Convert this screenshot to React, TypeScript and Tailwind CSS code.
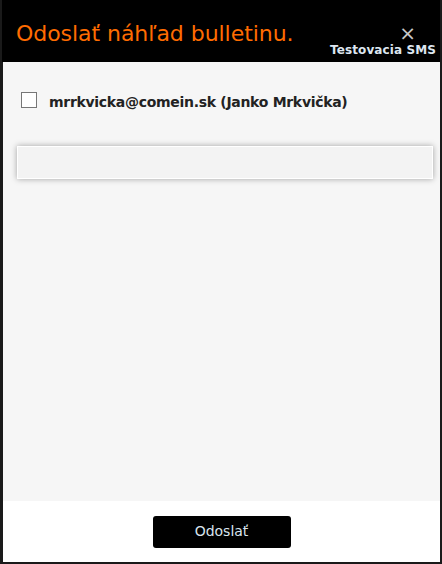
export default function App() {
  return (
    <div className="w-[442px] h-[564px] bg-[#1a1a1a] p-[2px] pt-0 flex flex-col" style={{ fontFamily: 'Tahoma, "DejaVu Sans", Verdana, sans-serif' }}>
      {/* Header */}
      <div className="relative h-[62px] bg-black shrink-0">
        <h1 className="absolute left-[14px] top-[20px] text-[22px] leading-[28px] text-[#ff6c00] tracking-[-0.05px]">
          Odoslať náhľad bulletinu.
        </h1>
        <button className="absolute right-[24px] top-[23px] text-[#c8c8c8] text-[20px] leading-[20px]">×</button>
        <span className="absolute right-[4px] top-[42px] text-[12px] leading-[16px] font-bold text-[#dde6f0] tracking-[0.1px]">
          Testovacia SMS
        </span>
      </div>

      {/* Body */}
      <div className="flex-1 bg-[#f6f6f6] ml-[1px] pl-[14px] pr-[7px] pt-[27px]">
        <label className="flex items-start gap-[12px] pl-[4px]">
          <span className="mt-[3px] w-[16px] h-[16px] border border-[#777] bg-white shrink-0" />
          <span className="text-[14px] leading-[20px] font-bold text-[#222] tracking-[-0.3px] pt-[3px]">
            mrrkvicka@comein.sk (Janko Mrkvička)
          </span>
        </label>
        <div className="mt-[34px] h-[33px] bg-[#f3f3f3] border border-white shadow-[0_0_6px_rgba(0,0,0,0.35)]" />
      </div>

      {/* Footer */}
      <div className="h-[61px] bg-white ml-[1px] flex items-center justify-center shrink-0">
        <button className="w-[138px] h-[32px] bg-black rounded-[3px] text-[14px] text-[#d9e4ee]">
          Odoslať
        </button>
      </div>
    </div>
  )
}
